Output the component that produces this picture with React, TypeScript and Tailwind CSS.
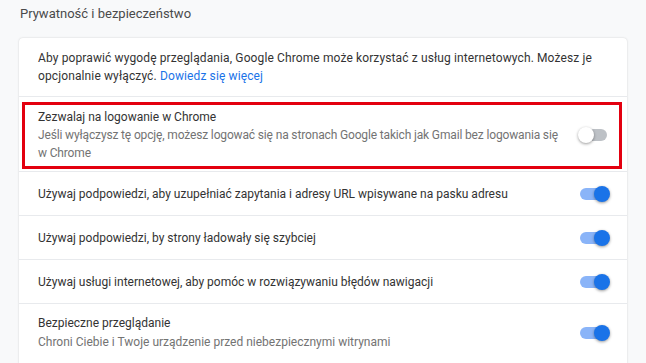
type Row = {
  label: string;
  sub?: string;
  on: boolean;
};

const rows: Row[] = [
  {
    label: "Używaj podpowiedzi, aby uzupełniać zapytania i adresy URL wpisywane na pasku adresu",
    on: true,
  },
  { label: "Używaj podpowiedzi, by strony ładowały się szybciej", on: true },
  {
    label: "Używaj usługi internetowej, aby pomóc w rozwiązywaniu błędów nawigacji",
    on: true,
  },
  {
    label: "Bezpieczne przeglądanie",
    sub: "Chroni Ciebie i Twoje urządzenie przed niebezpiecznymi witrynami",
    on: true,
  },
];

function Toggle({ on }: { on: boolean }) {
  return (
    <div className="relative h-4 w-[32px] shrink-0">
      <div
        className={`absolute left-[2px] top-[2px] h-3 w-[27px] rounded-full ${
          on ? "bg-[#8ab4f8]" : "bg-[#bdc1c6]"
        }`}
      />
      <div
        className={`absolute top-0 h-4 w-4 rounded-full shadow-[0_1px_3px_rgba(0,0,0,0.4)] ${
          on ? "left-[16px] bg-[#1a73e8]" : "left-0 bg-white"
        }`}
      />
    </div>
  );
}

export default function App() {
  return (
    <div
      className="h-[363px] w-[646px] overflow-hidden bg-[#f8f9fa] text-[12px] text-[#333]"
      style={{ fontFamily: "Roboto, 'Liberation Sans', sans-serif" }}
    >
      <div className="h-[38px] pl-5 pt-[4px] text-[13px] leading-5 text-[#4a4a4a]">
        Prywatność i bezpieczeństwo
      </div>

      <div className="ml-[19px] w-[608px] rounded-t-[4px] bg-white shadow-[0_0_2px_rgba(0,0,0,0.18)]">
        <div className="whitespace-nowrap border-b border-[#e8eaed] px-[19px] py-[11px] leading-[18px] tracking-[0.12px]">
          Aby poprawić wygodę przeglądania, Google Chrome może korzystać z usług internetowych. Możesz je
          <br />
          opcjonalnie wyłączyć.{" "}
          <span className="text-[#1a73e8]">Dowiedz się więcej</span>
        </div>

        <div className="relative flex items-center border-b border-[#e8eaed] pl-[19px] pr-[17px] pt-[11px] pb-[9px] leading-[18px]">
          <div className="flex-1 whitespace-nowrap">
            <div>Zezwalaj na logowanie w Chrome</div>
            <div className="tracking-[-0.15px] text-[#737373]">
              Jeśli wyłączysz tę opcję, możesz logować się na stronach Google takich jak Gmail bez logowania się
              <br />w Chrome
            </div>
          </div>
          <Toggle on={false} />
          <div className="pointer-events-none absolute left-[3px] right-[5px] top-[5px] bottom-[2px] border-[3px] border-[#e3000f]" />
        </div>

        {rows.map((row) => (
          <div
            key={row.label}
            className={`flex items-center border-b border-[#e8eaed] pl-[19px] pr-[17px] leading-[18px] ${
              row.sub ? "pt-[10px] pb-[12px]" : "h-[44px]"
            }`}
          >
            <div className="flex-1 whitespace-nowrap">
              <div>{row.label}</div>
              {row.sub ? (
                <div className="mt-px text-[#737373]">{row.sub}</div>
              ) : null}
            </div>
            <Toggle on={row.on} />
          </div>
        ))}
      </div>
    </div>
  );
}
